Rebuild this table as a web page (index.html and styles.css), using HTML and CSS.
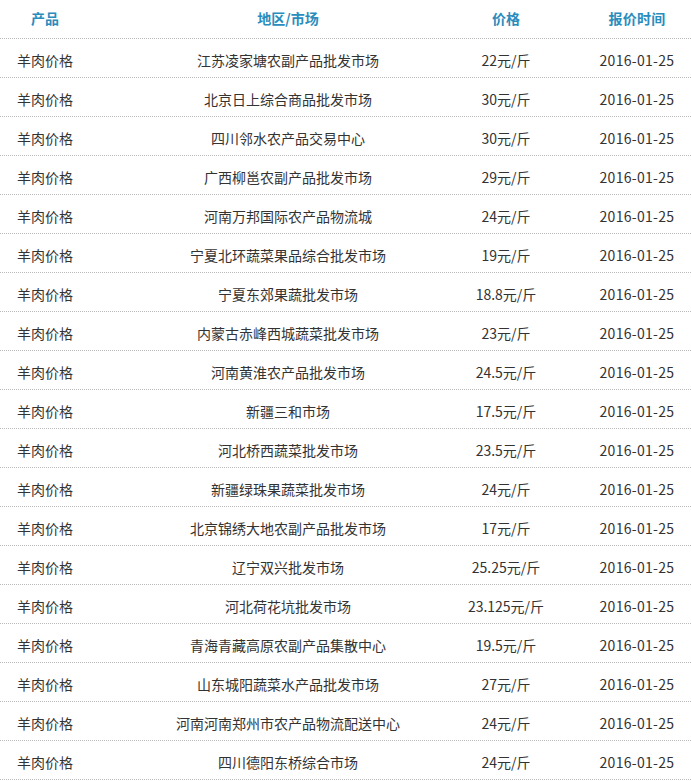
FILE: index.html
```html
<!DOCTYPE html>
<html lang="zh-CN">
<head>
<meta charset="utf-8">
<title>羊肉价格</title>
<link rel="stylesheet" href="styles.css">
</head>
<body>
<div class="table">
  <div class="row head">
    <div class="c1">产品</div><div class="c2">地区/市场</div><div class="c3">价格</div><div class="c4">报价时间</div>
  </div>
  <div class="row"><div class="c1">羊肉价格</div><div class="c2">江苏凌家塘农副产品批发市场</div><div class="c3">22元/斤</div><div class="c4">2016-01-25</div></div>
  <div class="row"><div class="c1">羊肉价格</div><div class="c2">北京日上综合商品批发市场</div><div class="c3">30元/斤</div><div class="c4">2016-01-25</div></div>
  <div class="row"><div class="c1">羊肉价格</div><div class="c2">四川邻水农产品交易中心</div><div class="c3">30元/斤</div><div class="c4">2016-01-25</div></div>
  <div class="row"><div class="c1">羊肉价格</div><div class="c2">广西柳邕农副产品批发市场</div><div class="c3">29元/斤</div><div class="c4">2016-01-25</div></div>
  <div class="row"><div class="c1">羊肉价格</div><div class="c2">河南万邦国际农产品物流城</div><div class="c3">24元/斤</div><div class="c4">2016-01-25</div></div>
  <div class="row"><div class="c1">羊肉价格</div><div class="c2">宁夏北环蔬菜果品综合批发市场</div><div class="c3">19元/斤</div><div class="c4">2016-01-25</div></div>
  <div class="row"><div class="c1">羊肉价格</div><div class="c2">宁夏东郊果蔬批发市场</div><div class="c3">18.8元/斤</div><div class="c4">2016-01-25</div></div>
  <div class="row"><div class="c1">羊肉价格</div><div class="c2">内蒙古赤峰西城蔬菜批发市场</div><div class="c3">23元/斤</div><div class="c4">2016-01-25</div></div>
  <div class="row"><div class="c1">羊肉价格</div><div class="c2">河南黄淮农产品批发市场</div><div class="c3">24.5元/斤</div><div class="c4">2016-01-25</div></div>
  <div class="row"><div class="c1">羊肉价格</div><div class="c2">新疆三和市场</div><div class="c3">17.5元/斤</div><div class="c4">2016-01-25</div></div>
  <div class="row"><div class="c1">羊肉价格</div><div class="c2">河北桥西蔬菜批发市场</div><div class="c3">23.5元/斤</div><div class="c4">2016-01-25</div></div>
  <div class="row"><div class="c1">羊肉价格</div><div class="c2">新疆绿珠果蔬菜批发市场</div><div class="c3">24元/斤</div><div class="c4">2016-01-25</div></div>
  <div class="row"><div class="c1">羊肉价格</div><div class="c2">北京锦绣大地农副产品批发市场</div><div class="c3">17元/斤</div><div class="c4">2016-01-25</div></div>
  <div class="row"><div class="c1">羊肉价格</div><div class="c2">辽宁双兴批发市场</div><div class="c3">25.25元/斤</div><div class="c4">2016-01-25</div></div>
  <div class="row"><div class="c1">羊肉价格</div><div class="c2">河北荷花坑批发市场</div><div class="c3">23.125元/斤</div><div class="c4">2016-01-25</div></div>
  <div class="row"><div class="c1">羊肉价格</div><div class="c2">青海青藏高原农副产品集散中心</div><div class="c3">19.5元/斤</div><div class="c4">2016-01-25</div></div>
  <div class="row"><div class="c1">羊肉价格</div><div class="c2">山东城阳蔬菜水产品批发市场</div><div class="c3">27元/斤</div><div class="c4">2016-01-25</div></div>
  <div class="row"><div class="c1">羊肉价格</div><div class="c2">河南河南郑州市农产品物流配送中心</div><div class="c3">24元/斤</div><div class="c4">2016-01-25</div></div>
  <div class="row"><div class="c1">羊肉价格</div><div class="c2">四川德阳东桥综合市场</div><div class="c3">24元/斤</div><div class="c4">2016-01-25</div></div>
</div>
</body>
</html>
```
FILE: styles.css
```css
html, body {
  margin: 0;
  padding: 0;
  background: #fff;
}
body {
  font-family: "Noto Sans CJK SC", "Open Sans", sans-serif;
  font-size: 14px;
  color: #333;
  overflow: hidden;
}
.table {
  width: 691px;
}
.row {
  display: grid;
  grid-template-columns: 90px 356px 120px 125px;
  box-sizing: border-box;
  height: 39px;
  padding-top: 4px;
  align-items: center;
  border-bottom: 1px dotted #bbb;
  white-space: nowrap;
}
.row > div {
  text-align: center;
}
.head {
  height: 39px;
  padding-top: 0;
  padding-bottom: 3px;
  color: #2a8cbd;
  font-weight: bold;
}
.c2 { padding-left: 40px; }
.c4 { padding-left: 17px; letter-spacing: 0.3px; }
```
